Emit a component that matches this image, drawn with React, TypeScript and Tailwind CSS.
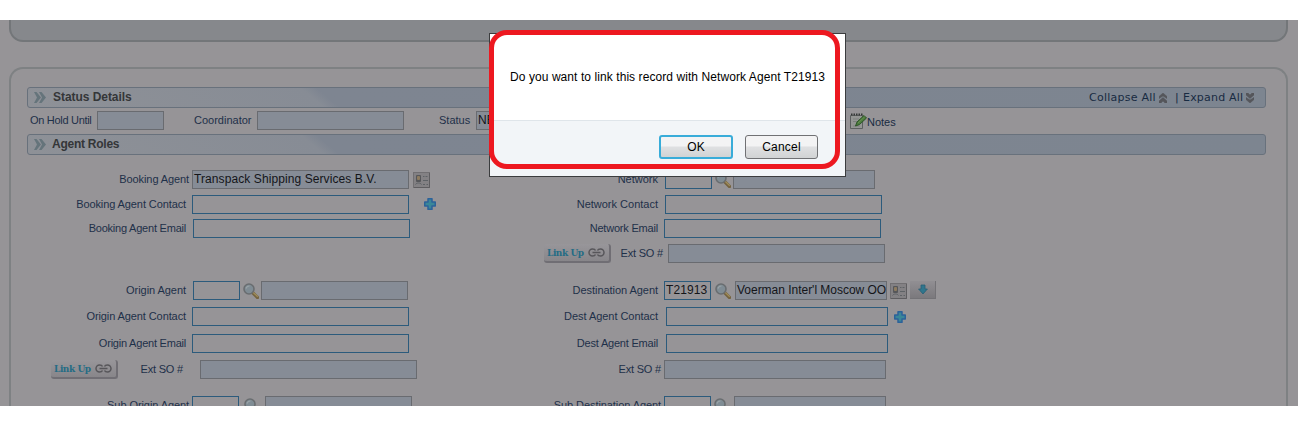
import type { ReactNode } from "react";
import clsx from "clsx";

const Magnifier = ({ className }: { className?: string }) => (
  <svg className={clsx("h-4 w-4 shrink-0", className)} viewBox="0 0 16 16" fill="none">
    <path d="M9.5 9.5l5 5" stroke="#75633f" strokeWidth="3.2" strokeLinecap="round" />
    <path d="M10 9.2l4.8 4.6" stroke="#a08e5c" strokeWidth="1.2" />
    <circle cx="6" cy="6" r="5" fill="#7f8c94" stroke="#696d70" strokeWidth="1.6" />
    <path d="M3 5.5C3.5 3.8 5 3 6.5 3" stroke="#9aa3a6" strokeWidth="1.2" />
  </svg>
);

const Plus = ({ className }: { className?: string }) => (
  <svg className={clsx("h-3 w-3 shrink-0", className)} viewBox="0 0 12 12">
    <path
      d="M4 .8h4V4h3.3v4H8v3.3H4V8H.7V4H4z"
      fill="#3a8798"
      stroke="#2c629a"
      strokeWidth="1.5"
      strokeLinejoin="round"
    />
  </svg>
);

const Card = ({ className }: { className?: string }) => (
  <svg className={clsx("h-4 w-[17px] shrink-0", className)} viewBox="0 0 17 16">
    <rect x=".5" y=".5" width="16" height="15" fill="#838184" stroke="#716f72" />
    <path d="M1 15.5h15.5V1" fill="none" stroke="#5e5d60" />
    <rect x="3" y="3" width="5" height="7" rx="1" fill="#56575a" />
    <rect x="4" y="4" width="3" height="4" rx="1" fill="#8d7b60" />
    <path d="M2.5 12.5c1-2 5-2 6 0M10 4.5h1.5M12.5 4.5h2M10 8.5h5M10 12.5h2M13.5 12.5h1.5" stroke="#5e6266" fill="none" />
  </svg>
);

const DownButton = () => (
  <span className="ml-[3px] flex h-[18px] w-[26px] items-center justify-center border-r border-b border-[#737276] bg-linear-to-b from-[#918f93] to-[#7b797d]">
    <svg className="h-[11px] w-[10px]" viewBox="0 0 10 11">
      <path d="M3 1h4v4h2.4L5 10 .6 5H3z" fill="#30768d" stroke="#286076" strokeWidth=".8" />
    </svg>
  </span>
);

const LinkUp = ({ className }: { className?: string }) => (
  <button
    className={clsx(
      "flex h-[19px] w-[67px] shrink-0 items-center rounded-[3px] border-r-2 border-b-2 border-[#706e74] bg-linear-to-b from-[#98969a] to-[#88868a] pl-[3px]",
      className,
    )}
  >
    <span className="w-[38px] whitespace-nowrap text-left font-['DejaVu_Serif',serif] text-[9px] font-bold leading-3 tracking-[-0.45px] text-[#256c85]">
      Link Up
    </span>
    <svg className="ml-[3px] h-[9px] w-[17px]" viewBox="0 0 17 9" fill="none" stroke="#57565a" strokeWidth="1.5">
      <path d="M7.5 2.5C7 1.2 6 1 4.5 1a3.4 3.4 0 000 7C6 8 7 7.6 7.5 6.5M9.5 2.5C10 1.2 11 1 12.5 1a3.4 3.4 0 010 7C11 8 10 7.6 9.5 6.5M4.5 4.5h8" />
    </svg>
  </button>
);

type FieldProps = { className: string; readOnly?: boolean; children?: ReactNode };

const Field = ({ className, readOnly, children }: FieldProps) => (
  <div
    className={clsx(
      "h-[19px] shrink-0 overflow-hidden whitespace-nowrap border pl-px text-xs leading-[17px] text-[#141519]",
      readOnly ? "border-[#696b70] bg-[#868c96]" : "border-[#2c5b7c]",
      className,
    )}
  >
    {children}
  </div>
);

const Label = ({ className, children }: { className: string; children: ReactNode }) => (
  <label className={clsx("shrink-0 whitespace-nowrap text-right text-[11px] leading-[19px] text-[#1e3049]", className)}>
    {children}
  </label>
);

const Row = ({ className, left, right }: { className?: string; left?: ReactNode; right?: ReactNode }) => (
  <div className={clsx("flex h-[19px] shrink-0", className)}>
    <div className="flex w-[490px] shrink-0">{left}</div>
    <div className="flex">{right}</div>
  </div>
);

type SectionBarProps = { title: string; titleClass: string; className?: string; children?: ReactNode };

const SectionBar = ({ title, titleClass, className, children }: SectionBarProps) => (
  <div
    className={clsx(
      "ml-4 flex h-[21px] w-[1239px] shrink-0 items-center rounded-[3px] border border-[#68717c] bg-[linear-gradient(40deg,#8e9197_0px,#878c95_190px,#7e8591_200px,#7d8590_100%)] pl-[6px]",
      className,
    )}
  >
    <svg className="h-[11px] w-[12px]" viewBox="0 0 12 11">
      <path d="M0 0h2.5L7 5.5 2.5 11H0l3-5.5zM5 0h2.5L12 5.5 7.5 11H5l3-5.5z" fill="#65747b" />
    </svg>
    <h2 className={clsx("whitespace-nowrap pb-[2px] text-xs font-bold text-[#343638]", titleClass)}>{title}</h2>
    {children}
  </div>
);

const Chevrons = ({ down }: { down?: boolean }) => (
  <svg className={clsx("h-[10px] w-[8px]", down && "rotate-180")} viewBox="0 0 8 10">
    <path d="M4 0l4 3.5v2L4 3 0 5.5v-2zM4 4.5L8 8v2H6L4 8l-2 2H0V8z" fill="#55565b" stroke="#55565b" strokeWidth=".5" />
  </svg>
);

const NotesIcon = () => (
  <svg className="h-4 w-[17px]" viewBox="0 0 17 16" fill="none">
    <path d="M.5 2.5h12v13H.5z" fill="#949694" stroke="#5c6060" />
    <path d="M1 1.5h12" stroke="#343837" strokeWidth="2" strokeDasharray="1.5 1" />
    <path d="M3 6h6M3 8.5h4M3 13h7" stroke="#7c807e" />
    <path d="M5.5 13l1.5-4 7-6.5L16.500 5l-7 6.5z" fill="#4a7c3c" stroke="#2e5528" />
    <path d="M8 10l6.5-6" stroke="#6b8f54" />
  </svg>
);

const ConfirmDialog = () => (
  <>
    <div className="absolute top-[33px] left-[489px] flex h-[144px] w-[357px] flex-col border border-[#3b3c3e] bg-white">
      <p className="h-[86px] whitespace-nowrap pt-[34px] pl-5 text-xs leading-[18px] tracking-[0.075px] text-black">
        Do you want to link this record with Network Agent T21913
      </p>
      <div className="flex flex-1 justify-end gap-3 border-t border-[#dfe5ea] bg-[#f2f5f8] pt-[14px] pr-[27px]">
        <button className="h-6 w-[74px] rounded-[3px] border-2 border-[#38acd9] bg-linear-to-b from-[#f3f3f4] from-45% via-[#dfe0e2] via-50% to-[#d1d3d4] pb-px text-xs leading-[18px]">
          OK
        </button>
        <button className="h-6 w-[73px] rounded-[3px] border border-[#707174] bg-linear-to-b from-[#f3f3f4] from-45% via-[#dfe0e2] via-50% to-[#d1d3d4] pb-px text-xs leading-5 tracking-[0.2px]">
          Cancel
        </button>
      </div>
    </div>
    <div className="absolute top-[30px] left-[489px] h-[139px] w-[351px] rounded-[18px] border-[5px] border-[#ed1820]" />
  </>
);

export default function App() {
  return (
    <div className="relative h-[430px] w-[1301px] overflow-hidden bg-white pt-5 font-['Liberation_Sans',Arial,sans-serif]">
      <div className="flex h-[386px] w-[1298px] flex-col overflow-hidden bg-[#969497]">
        <div className="ml-[9px] h-[22px] w-[1279px] shrink-0 rounded-b-[14px] border-2 border-t-0 border-[#737679] bg-[#86888c]" />

        <div className="mt-[25px] ml-[9px] flex h-[400px] w-[1279px] shrink-0 flex-col rounded-t-[14px] border-2 border-b-0 border-[#7e8183] pt-[18px]">
          <SectionBar title="Status Details" titleClass="ml-[7px] tracking-[-0.05px]">
            <div className="ml-auto flex items-center whitespace-pre pt-px pr-[11px] font-['DejaVu_Sans',Verdana,sans-serif] text-[11px] text-[#182b42]">
              <span className="mr-[2px] w-[68px] tracking-[0.25px]">Collapse All</span>
              <Chevrons />
              <span className="ml-2 w-[8px]">|</span>
              <span className="mr-[2px] w-[61px] tracking-[0.2px]">Expand All</span>
              <Chevrons down />
            </div>
          </SectionBar>

          <div className="mt-[3px] flex h-[19px] shrink-0 pl-[19px]">
            <Label className="w-[61px] tracking-[-0.3px]">On Hold Until</Label>
            <Field readOnly className="ml-[6px] w-[67px]" />
            <Label className="ml-[30px] w-[57px]">Coordinator</Label>
            <Field readOnly className="ml-[6px] w-[147px]" />
            <Label className="ml-[35px] w-[31px]">Status</Label>
            <Field readOnly className="ml-[6px] w-[120px]">NEW</Field>
            <a className="ml-[254px] flex items-center text-[11px] text-[#182b42]">
              <NotesIcon />
              <span className="pt-[3px]">Notes</span>
            </a>
          </div>

          <SectionBar title="Agent Roles" titleClass="ml-[6px] tracking-[-0.25px]" className="mt-1" />

          <div className="-ml-[11px] flex flex-col pt-[15px]">
            <Row
              left={
                <>
                  <Label className="w-[189px] tracking-[-0.1px]">Booking Agent</Label>
                  <Field readOnly className="ml-[3px] w-[217px] tracking-[0.09px]">Transpack Shipping Services B.V.</Field>
                  <Card className="mt-[2px] ml-1" />
                </>
              }
              right={
                <>
                  <Label className="w-[168px]">Network</Label>
                  <Field className="ml-[7px] w-[47px]" />
                  <Magnifier className="mt-[2px] ml-[3px]" />
                  <Field readOnly className="ml-[2px] w-[142px]" />
                </>
              }
            />
            <Row
              className="mt-[6px]"
              left={
                <>
                  <Label className="w-[186px] tracking-[-0.1px]">Booking Agent Contact</Label>
                  <Field className="ml-[6px] w-[217px]" />
                  <Plus className="mt-[3px] ml-[15px]" />
                </>
              }
              right={
                <>
                  <Label className="w-[168px]">Network Contact</Label>
                  <Field className="ml-[7px] w-[217px]" />
                </>
              }
            />
            <Row
              className="mt-[5px]"
              left={
                <>
                  <Label className="w-[186px] tracking-[-0.22px]">Booking Agent Email</Label>
                  <Field className="ml-[7px] w-[217px]" />
                </>
              }
              right={
                <>
                  <Label className="w-[168px] tracking-[-0.2px]">Network Email</Label>
                  <Field className="ml-[6px] w-[217px]" />
                </>
              }
            />
            <Row
              className="mt-[6px]"
              right={
                <>
                  <LinkUp className="ml-[54px]" />
                  <Label className="w-[52px] tracking-[-0.2px]">Ext SO #</Label>
                  <Field readOnly className="ml-[5px] w-[217px]" />
                </>
              }
            />
            <Row
              className="mt-[18px]"
              left={
                <>
                  <Label className="w-[186px] tracking-[-0.05px]">Origin Agent</Label>
                  <Field className="ml-[7px] w-[47px]" />
                  <Magnifier className="mt-[2px] ml-[3px]" />
                  <Field readOnly className="ml-[2px] w-[147px]" />
                </>
              }
              right={
                <>
                  <Label className="w-[168px] tracking-[-0.05px]">Destination Agent</Label>
                  <Field className="ml-[6px] w-[47px] tracking-[0.09px]">T21913</Field>
                  <Magnifier className="mt-[2px] ml-1" />
                  <Field readOnly className="ml-1 w-[152px] tracking-[-0.02px]">Voerman Inter'l Moscow OO</Field>
                  <Card className="mt-[2px] ml-[3px]" />
                  <DownButton />
                </>
              }
            />
            <Row
              className="mt-[7px]"
              left={
                <>
                  <Label className="w-[186px] tracking-[-0.1px]">Origin Agent Contact</Label>
                  <Field className="ml-[6px] w-[217px]" />
                </>
              }
              right={
                <>
                  <Label className="w-[168px] tracking-[-0.05px]">Dest Agent Contact</Label>
                  <Field className="ml-2 w-[222px]" />
                  <Plus className="mt-1 ml-[6px]" />
                </>
              }
            />
            <Row
              className="mt-2"
              left={
                <>
                  <Label className="w-[186px] tracking-[-0.22px]">Origin Agent Email</Label>
                  <Field className="ml-[6px] w-[217px]" />
                </>
              }
              right={
                <>
                  <Label className="w-[168px] tracking-[-0.2px]">Dest Agent Email</Label>
                  <Field className="ml-2 w-[222px]" />
                </>
              }
            />
            <Row
              className="mt-[7px]"
              left={
                <>
                  <LinkUp className="ml-[51px]" />
                  <Label className="w-[65px] tracking-[-0.2px]">Ext SO #</Label>
                  <Field readOnly className="ml-[17px] w-[217px]" />
                </>
              }
              right={
                <>
                  <Label className="w-[171px] tracking-[-0.2px]">Ext SO #</Label>
                  <Field readOnly className="ml-[3px] w-[222px]" />
                </>
              }
            />
            <Row
              className="mt-[17px]"
              left={
                <>
                  <Label className="w-[189px] tracking-[-0.08px]">Sub Origin Agent</Label>
                  <Field className="ml-[3px] w-[47px]" />
                  <Magnifier className="mt-[2px] ml-[5px]" />
                  <Field readOnly className="ml-[5px] w-[147px]" />
                </>
              }
              right={
                <>
                  <Label className="w-[171px] tracking-[-0.08px]">Sub Destination Agent</Label>
                  <Field className="ml-[3px] w-[47px]" />
                  <Magnifier className="mt-[2px] ml-[3px]" />
                  <Field readOnly className="ml-1 w-[152px]" />
                </>
              }
            />
          </div>
        </div>
      </div>

      <ConfirmDialog />
    </div>
  );
}
